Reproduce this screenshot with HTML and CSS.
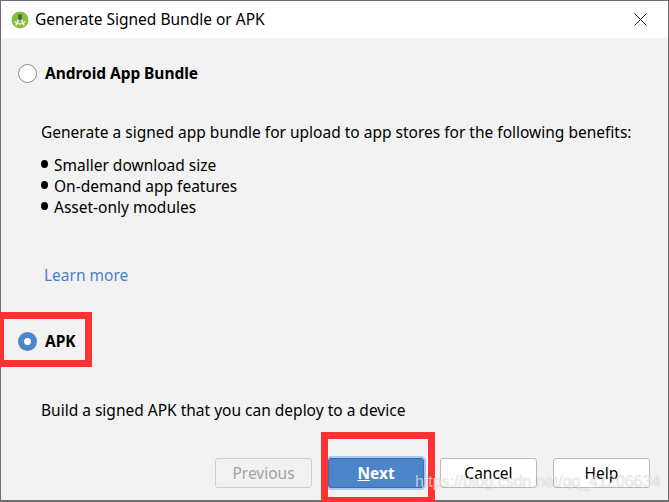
FILE: index.html
```html
<!DOCTYPE html>
<html lang="en">
<head>
  <meta charset="UTF-8">
  <meta name="viewport" content="width=device-width, initial-scale=1.0">
  <title>Generate Signed Bundle or APK</title>
  <link rel="stylesheet" href="styles.css">
</head>
<body>
  <div class="dialog">
    <div class="titlebar">
      <svg class="app-icon" width="18" height="18" viewBox="0 0 18 18">
        <circle cx="9" cy="9" r="8.5" fill="#85c13f"/>
        <path d="M8.5 6 L5 14.5 M9.5 6 L13 14.5" stroke="#f4f7ee" stroke-width="1.5" fill="none"/>
        <path d="M3.5 10.5 Q9 15.5 14.5 10.5" stroke="#e8f2d8" stroke-width="1.3" fill="none"/>
        <rect x="7" y="3" width="4" height="6" rx="1.5" fill="#4f6b4a"/>
      </svg>
      <span class="title">Generate Signed Bundle or APK</span>
      <svg class="close" width="13" height="13" viewBox="0 0 13 13">
        <path d="M0.5 0.5 L12.5 12.5 M12.5 0.5 L0.5 12.5" stroke="#222" stroke-width="1" fill="none"/>
      </svg>
    </div>

    <div class="content">
      <div class="option option-bundle">
        <span class="radio"></span>
        <span class="option-label">Android App Bundle</span>
      </div>
      <p class="intro">Generate a signed app bundle for upload to app stores for the following benefits:</p>
      <ul class="benefits">
        <li>Smaller download size</li>
        <li>On-demand app features</li>
        <li>Asset-only modules</li>
      </ul>
      <a class="learn" href="#">Learn more</a>
      <div class="option option-apk">
        <span class="radio radio-on"></span>
        <span class="option-label">APK</span>
      </div>
      <p class="apk-text">Build a signed APK that you can deploy to a device</p>
    </div>

    <div class="footer">
      <button class="btn btn-disabled">Previous</button>
      <button class="btn btn-primary"><u>N</u>ext</button>
      <button class="btn">Cancel</button>
      <button class="btn">Help</button>
    </div>
  </div>

  <!-- anotaciones rojas sobre la captura -->
  <div class="mark mark-apk"></div>
  <div class="mark mark-next"></div>
  <div class="watermark">https://blog.csdn.net/qq_41206634</div>
</body>
</html>
```

FILE: styles.css
```css
* {
  box-sizing: border-box;
}

html, body {
  margin: 0;
  padding: 0;
}

body {
  width: 669px;
  height: 502px;
  position: relative;
  overflow: hidden;
  font-family: "Noto Sans", "Open Sans", sans-serif;
  font-size: 15.5px;
  color: #000;
}

.dialog {
  width: 669px;
  height: 502px;
  display: flex;
  flex-direction: column;
  background-color: #f2f2f2;
  border: 1px solid #6e6e6e;
  border-width: 1px 1px 2px 1px;
}

.titlebar {
  height: 37px;
  flex: none;
  display: flex;
  align-items: center;
  padding: 0 21px 0 10px;
  background-color: #fff;
}

.app-icon {
  margin-right: 6px;
}

.title {
  flex: 1;
  margin-top: -1px;
}

.content {
  flex: 1;
  display: flex;
  flex-direction: column;
  padding-left: 17px;
}

.option {
  display: flex;
  align-items: center;
  gap: 8px;
  font-weight: 700;
  letter-spacing: -0.05px;
}

.option-bundle {
  margin-top: 24px;
}

.option-apk {
  margin-top: 44px;
}

.radio {
  width: 19px;
  height: 19px;
  flex: none;
  border: 1px solid #8c8c8c;
  border-radius: 50%;
  background-color: #fff;
}

.radio-on {
  border: 6.5px solid #4c86c8;
}

.intro {
  margin: 37px 0 0 23px;
  white-space: nowrap;
}

.benefits {
  margin: 12px 0 0 23px;
  padding: 0;
  list-style: none;
}

.benefits li {
  height: 21px;
  line-height: 21px;
  display: flex;
  align-items: center;
  gap: 6px;
}

.benefits li::before {
  content: "";
  width: 7px;
  height: 8px;
  margin-top: -3px;
  border-radius: 50%;
  background-color: #000;
}

.learn {
  margin: 46px 0 0 26px;
  color: #4a7fc9;
  text-decoration: none;
}

.apk-text {
  margin: 47px 0 0 23px;
}

.footer {
  flex: none;
  display: flex;
  justify-content: flex-end;
  gap: 16px;
  padding-right: 18px;
  height: 42px;
}

.btn {
  width: 97px;
  height: 30px;
  padding: 0;
  font-family: inherit;
  font-size: 15.5px;
  color: #000;
  background-color: #fff;
  border: 1px solid #b9b9b9;
  border-radius: 3px;
}

.btn-disabled {
  color: #a3a3a3;
  background-color: #f2f2f2;
  border-color: #cfcfcf;
}

.btn-primary {
  width: 96px;
  color: #fff;
  font-weight: 700;
  background-color: #4c86c8;
  border-color: #3a6ea8;
  box-shadow: 0 0 0 2px #a6c9f2;
}

.mark {
  position: absolute;
  border: 7px solid #ff3334;
}

.mark-apk {
  left: -3px;
  top: 312px;
  width: 95px;
  height: 55px;
}

.mark-next {
  left: 321px;
  top: 432px;
  width: 114px;
  height: 72px;
}

.watermark {
  position: absolute;
  left: 415px;
  top: 473px;
  font-family: "Liberation Sans", sans-serif;
  font-size: 16px;
  color: rgba(255, 255, 255, 0.7);
  text-shadow: 0 0 1px rgba(0, 0, 0, 0.25);
  white-space: nowrap;
}
```
